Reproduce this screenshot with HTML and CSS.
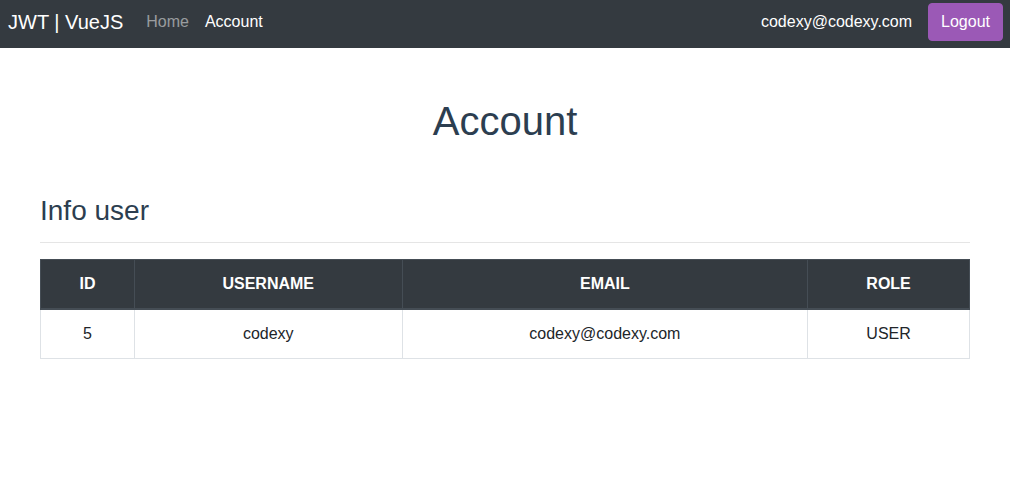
FILE: index.html
```html
<!DOCTYPE html>
<html lang="en">
<head>
<meta charset="utf-8">
<title>JWT | VueJS</title>
<link rel="stylesheet" href="styles.css">
</head>
<body>
<nav class="navbar">
  <a class="brand" href="#">JWT | VueJS</a>
  <ul class="nav-links">
    <li><a class="nav-link" href="#">Home</a></li>
    <li><a class="nav-link active" href="#">Account</a></li>
  </ul>
  <div class="nav-right">
    <span class="user-email">codexy@codexy.com</span>
    <button class="btn-logout" type="button">Logout</button>
  </div>
</nav>
<main class="container">
  <h1 class="page-title">Account</h1>
  <h3 class="section-title">Info user</h3>
  <hr class="divider">
  <table class="table">
    <thead>
      <tr>
        <th class="col-id">ID</th>
        <th class="col-user">USERNAME</th>
        <th class="col-email">EMAIL</th>
        <th class="col-role">ROLE</th>
      </tr>
    </thead>
    <tbody>
      <tr>
        <td>5</td>
        <td>codexy</td>
        <td>codexy@codexy.com</td>
        <td>USER</td>
      </tr>
    </tbody>
  </table>
</main>
</body>
</html>
```
FILE: styles.css
```css
* { box-sizing: border-box; }
html, body { margin: 0; padding: 0; }
body {
  font-family: "Liberation Sans", Arial, sans-serif;
  font-size: 16px;
  line-height: 1.5;
  color: #2c3e50;
  background: #fff;
}
.navbar {
  display: flex;
  align-items: center;
  height: 48px;
  padding: 2px 7px 6px 8px;
  background: #343a40;
}
.brand {
  color: #fff;
  font-size: 20px;
  line-height: 30px;
  text-decoration: none;
  margin-right: 15px;
}
.nav-links {
  display: flex;
  list-style: none;
  margin: 0;
  padding: 0;
}
.nav-link {
  display: block;
  padding: 8px 8px;
  color: rgba(255,255,255,.5);
  text-decoration: none;
  line-height: 24px;
}
.nav-link.active { color: #fff; }
.nav-right {
  margin-left: auto;
  display: flex;
  align-items: center;
  gap: 16px;
}
.user-email { color: #fff; line-height: 24px; }
.btn-logout {
  font-family: inherit;
  font-size: 16px;
  line-height: 24px;
  padding: 6px 12px;
  border: 1px solid #9b59b6;
  border-radius: 4px;
  background: #9b59b6;
  color: #fff;
  cursor: pointer;
}
.container {
  width: 960px;
  margin: 0 auto;
  padding: 0 15px;
}
.page-title {
  margin: 49px 0 49px;
  font-size: 40px;
  font-weight: 400;
  line-height: 48px;
  text-align: center;
}
.section-title {
  margin: 0 0 14px;
  font-size: 28px;
  font-weight: 400;
  line-height: 34px;
}
.divider {
  margin: 0 0 16px;
  border: 0;
  border-top: 1px solid rgba(0,0,0,.1);
}
.table {
  width: 100%;
  border-collapse: collapse;
  color: #212529;
  text-align: center;
}
.table th, .table td {
  padding: 12px;
  line-height: 24px;
  border: 1px solid #dee2e6;
}
.table th {
  background: #343a40;
  color: #fff;
  font-weight: 700;
  border-color: #454d55;
  border-bottom-width: 2px;
}
.col-id { width: 94px; }
.col-user { width: 268px; }
.col-email { width: 406px; }
.col-role { width: 162px; }
```
